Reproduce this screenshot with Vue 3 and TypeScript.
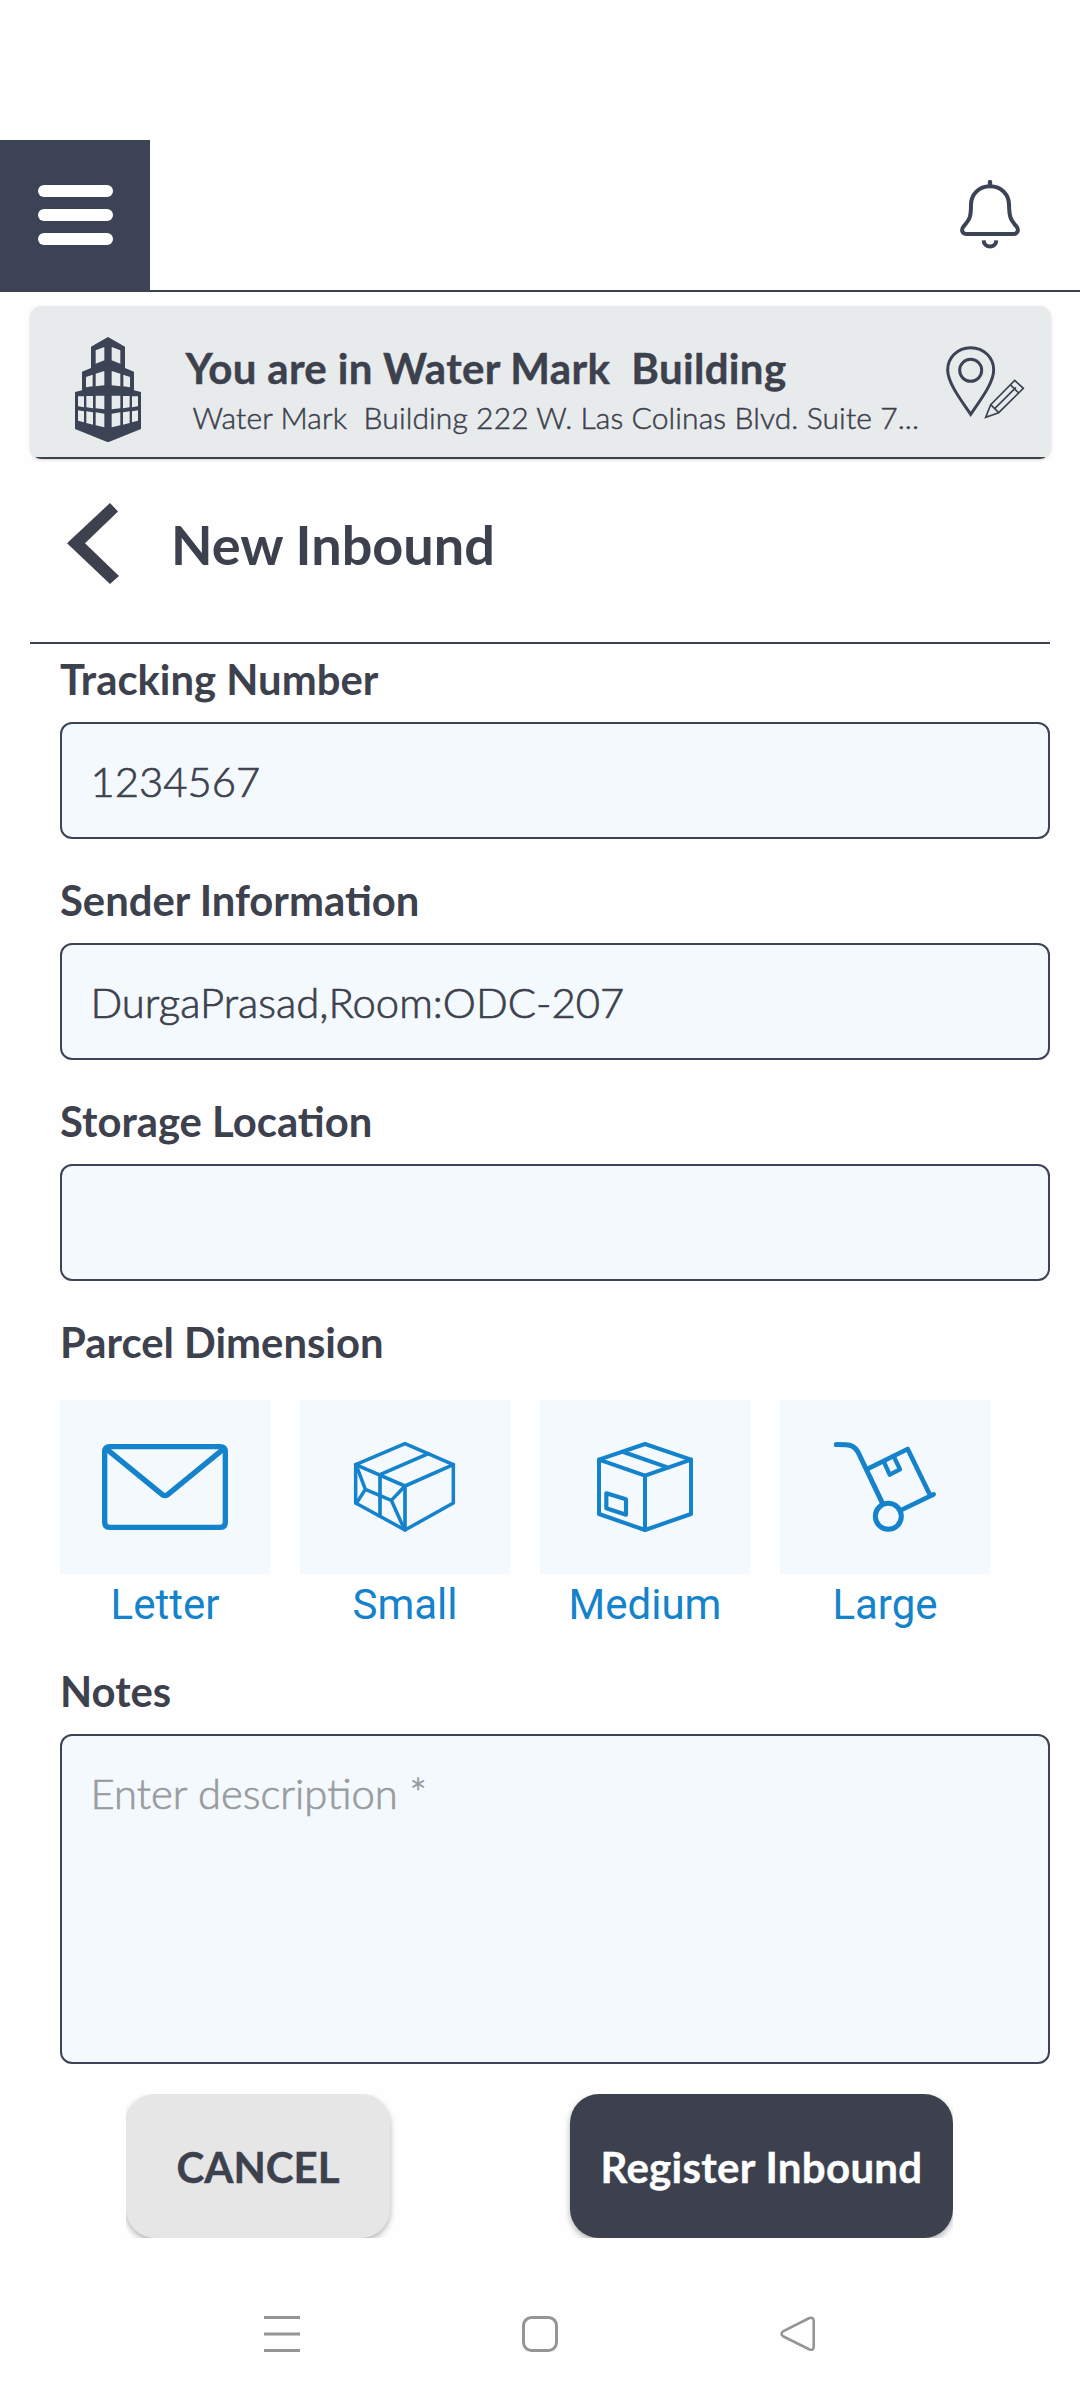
<script setup lang="ts">
import { ref } from 'vue'

interface Shape {
  d: string
  w: number
}

interface ParcelSize {
  name: string
  viewBox: string
  shapes: Shape[]
}

const tracking = ref('1234567')
const sender = ref('DurgaPrasad,Room:ODC-207')
const storage = ref('')
const notes = ref('')

const sizes: ParcelSize[] = [
  {
    name: 'Letter',
    viewBox: '30 60 630 522',
    shapes: [
      { d: 'M180 200H510Q526 200 526 216V426Q526 442 510 442H180Q164 442 164 426V216Q164 200 180 200Z', w: 16 },
      { d: 'M172 209L337 344Q345 349 353 344L518 209', w: 16 },
    ],
  },
  {
    name: 'Small',
    viewBox: '750 60 630 522',
    shapes: [
      { d: 'M1065 191L1210 254V369L1065 450L917 369V254Z', w: 10.5 },
      { d: 'M917 254L1065 318L1210 254M1065 318V450M1135 221L990 284V407', w: 11 },
      { d: 'M919 256L946 328L1024 361L1065 318M946 328L919 370M1024 361L1063 448', w: 10.5 },
    ],
  },
  {
    name: 'Medium',
    viewBox: '30 60 630 522',
    shapes: [
      { d: 'M345 192L483 239V402L345 450L207 402V239Z', w: 12 },
      { d: 'M207 239L345 287L483 239M345 287V450M280 216L415 263', w: 12 },
      { d: 'M229 340L288 358V404L229 385Z', w: 12.5 },
    ],
  },
  {
    name: 'Large',
    viewBox: '750 60 630 522',
    shapes: [
      { d: 'M919 193.500L948 194.500Q972 195 984 216L1058 371', w: 15 },
      { d: 'M1010 268L1133 207L1200 345M1114 390L1211 343', w: 14 },
      { d: 'M1061 244L1079 284L1110 268L1092 231', w: 13 },
      { d: 'M1036 409A39 39 0 1 0 1114 409A39 39 0 1 0 1036 409', w: 15 },
    ],
  },
]

const windows: string[] = [
  'M287 660L313 650V690L287 700Z',
  'M258 740L278 733V768L258 771Z',
  'M287 730L313 722V765L287 768Z',
  'M234 798H252V831L234 828Z',
  'M259 797H279V834L259 831Z',
  'M287 796H313V837L287 834Z',
  'M234 840L252 843V876L234 871Z',
  'M259 843L279 846V883L259 878Z',
  'M287 846L313 850V891L287 885Z',
]
</script>

<template>
  <div class="screen">
    <header class="topbar">
      <button class="menu" aria-label="Menu"><i></i><i></i><i></i></button>
      <svg class="bell" viewBox="720 150 180 207" fill="none" stroke="#3b4354" stroke-width="12">
        <path d="M810 156V168" stroke-width="13" stroke-linecap="round" />
        <path
          d="M810 169C775 169 753 195 753 224C753 262 749 268 731 289C722 300 727 312 740 312H880C893 312 898 300 889 289C871 268 868 262 867 224C867 195 845 169 810 169Z"
        />
        <path d="M791 331C792 356 828 356 829 331" />
      </svg>
    </header>

    <section class="place">
      <svg class="building" viewBox="225 620 198 316">
        <path
          fill="#3b4354"
          d="M324 620L375 649V713L402 724V780L423 785V896L324 936L225 896V785L246 780V724L273 713V649Z"
        />
        <g fill="#e8ebec">
          <path v-for="w in windows" :key="w" :d="w" />
        </g>
        <g fill="#e8ebec" transform="translate(648 0) scale(-1 1)">
          <path v-for="w in windows" :key="w" :d="w" />
        </g>
      </svg>
      <div class="place-text">
        <h2>You are in Water Mark&nbsp; Building</h2>
        <p>Water Mark&nbsp; Building 222 W. Las Colinas Blvd. Suite 7...</p>
      </div>
      <svg class="pin" viewBox="678 647 236 219" fill="none" stroke="#3b4354">
        <path
          stroke-width="9"
          d="M752 652C712 652 683 682 683 719C683 757 722 808 752 852C782 808 821 757 821 719C821 682 792 652 752 652Z"
        />
        <circle cx="752" cy="720" r="33" stroke-width="9" />
        <path
          stroke-width="5"
          d="M797 861L812 823L884 750L910 774L836 847ZM812 823L836 847M824 835L888 771M870 762L896 788"
        />
      </svg>
    </section>

    <div class="heading">
      <svg class="back" viewBox="0 0 52 81">
        <path fill="#3c414d" d="M43 0L51 8.500L18 40.300L52 73L43 81L0 40.300Z" />
      </svg>
      <h1>New Inbound</h1>
    </div>

    <main class="form">
      <label>Tracking Number</label>
      <input v-model="tracking" type="text" />
      <label>Sender Information</label>
      <input v-model="sender" type="text" />
      <label>Storage Location</label>
      <input v-model="storage" type="text" />
      <label class="parcel">Parcel Dimension</label>
      <div class="sizes">
        <div v-for="s in sizes" :key="s.name" class="size">
          <svg :viewBox="s.viewBox" fill="none" stroke="#1583cb" stroke-linejoin="round" stroke-linecap="round">
            <path v-for="p in s.shapes" :key="p.d" :d="p.d" :stroke-width="p.w" />
          </svg>
          <span>{{ s.name }}</span>
        </div>
      </div>
      <label>Notes</label>
      <textarea v-model="notes" placeholder="Enter description *"></textarea>
    </main>

    <div class="actions">
      <div class="clip-left"><button class="cancel">CANCEL</button></div>
      <div class="clip-right"><button class="register">Register Inbound</button></div>
    </div>

    <nav class="system">
      <svg viewBox="0 0 36 36"><path d="M0 1.500H36M0 18H36M0 34.500H36" /></svg>
      <svg viewBox="0 0 36 36"><rect x="1.500" y="1.500" width="33" height="33" rx="8" /></svg>
      <svg viewBox="0 0 36 36">
        <path
          stroke-width="2.600"
          d="M29.500 2L3.500 15Q-.500 18 3.500 20.500L29.500 33.500Q33.700 34.500 33.700 31V5Q33.700 1 29.500 2Z"
        />
      </svg>
    </nav>
  </div>
</template>

<style>
body {
  margin: 0;
  background: #fefefe;
}
</style>

<style scoped>
.screen {
  width: 1080px;
  height: 2400px;
  box-sizing: border-box;
  padding-top: 140px;
  overflow: hidden;
  background: #fefefe;
  color: #3c414d;
  font-family: Lato, 'Liberation Sans', sans-serif;
}
.screen * {
  box-sizing: border-box;
}
h1,
h2,
p {
  margin: 0;
  white-space: nowrap;
}
button {
  border: 0;
  padding: 0;
  font-family: inherit;
}
.topbar {
  display: flex;
  justify-content: space-between;
  height: 152px;
  border-bottom: 2px solid #3c414d;
}
.menu {
  width: 150px;
  height: 150px;
  display: flex;
  flex-direction: column;
  align-items: center;
  justify-content: center;
  gap: 12px;
  background: #3b4354;
}
.menu i {
  width: 75px;
  height: 12px;
  border-radius: 6px;
  background: #fff;
}
.bell {
  width: 60px;
  height: 69px;
  margin: 40px 60px 0 0;
}
.place {
  display: flex;
  align-items: flex-start;
  height: 153px;
  margin: 14px 29px 0 29.500px;
  border-radius: 12px;
  background: linear-gradient(#3c414d, #3c414d) 0 100% / 100% 2px no-repeat, #e8ebec;
  box-shadow: 0 1px 3px rgba(0, 0, 0, 0.16);
}
.building {
  width: 66px;
  height: 105.300px;
  margin: 30.700px 0 0 45.500px;
}
.place-text {
  width: 760px;
  padding: 37px 0 0 44.500px;
}
h2 {
  font-size: 42px;
  font-weight: 700;
  line-height: 50px;
  letter-spacing: 0.33px;
  -webkit-text-stroke: 0.4px #3c414d;
}
p {
  padding: 6px 0 0 7px;
  font-size: 30px;
  font-weight: 300;
  line-height: 36px;
  letter-spacing: 0.11px;
  -webkit-text-stroke: 0.5px #3c414d;
}
.pin {
  width: 78.700px;
  height: 73px;
  margin: 39.700px 0 0 45px;
}
.heading {
  display: flex;
  height: 185px;
  margin: 0 30px;
  padding: 43.700px 0 0 37px;
  border-bottom: 2px solid #3c414d;
}
.back {
  width: 52px;
  height: 81px;
}
h1 {
  margin-left: 52px;
  font-size: 54px;
  font-weight: 700;
  line-height: 83px;
}
.form {
  display: flex;
  flex-direction: column;
  padding: 10px 30px 0 60px;
}
label {
  height: 50px;
  margin-bottom: 18px;
  font-size: 41.800px;
  font-weight: 700;
  line-height: 50px;
}
label.parcel {
  margin-bottom: 33px;
}
input,
textarea {
  width: 990px;
  border: 2px solid #3b4354;
  border-radius: 12px;
  outline: 0;
  background: #f4f9fd;
  color: #3c414d;
  font-family: inherit;
  font-size: 41.800px;
  font-weight: 300;
  -webkit-text-stroke: 0.7px #3c414d;
}
input {
  height: 117px;
  margin: 0 0 36px;
  padding: 0 28.500px;
}
textarea {
  display: block;
  height: 330px;
  margin: 0;
  padding: 32px 28.500px;
  line-height: 50px;
  resize: none;
}
textarea::placeholder {
  color: #999c9f;
  opacity: 1;
  -webkit-text-stroke: 0.7px #999c9f;
}
.sizes {
  display: flex;
  gap: 30px;
  margin-bottom: 36px;
}
.size {
  display: flex;
  flex-direction: column;
  align-items: center;
  gap: 6px;
  width: 210px;
  color: #1583cb;
  font: 400 42px/50px Roboto, sans-serif;
}
.size svg {
  width: 210px;
  height: 174px;
  background: #f4f9fd;
}
.actions {
  display: flex;
  justify-content: space-between;
  height: 174px;
  padding: 30px 127px 0 126px;
}
.clip-left,
.clip-right {
  height: 144px;
  overflow: hidden;
}
.clip-left {
  padding-right: 10px;
}
.clip-right {
  padding-left: 10px;
}
.actions button {
  display: block;
  height: 144px;
  padding-top: 2px;
  border-radius: 29px;
  box-shadow: 0 3px 6px rgba(0, 0, 0, 0.3);
  font-size: 42px;
  font-weight: 700;
}
.actions .cancel {
  width: 264px;
  background: #e6e6e6;
  color: #3c414d;
  -webkit-text-stroke: 0.4px #3c414d;
}
.actions .register {
  width: 383px;
  background: #3c414d;
  color: #fff;
  letter-spacing: 0.3px;
  -webkit-text-stroke: 0.4px #fff;
}
.system {
  display: flex;
  justify-content: space-between;
  padding: 78px 264px 0;
}
.system svg {
  width: 36px;
  height: 36px;
  fill: none;
  stroke: #959595;
  stroke-width: 3;
}
</style>
